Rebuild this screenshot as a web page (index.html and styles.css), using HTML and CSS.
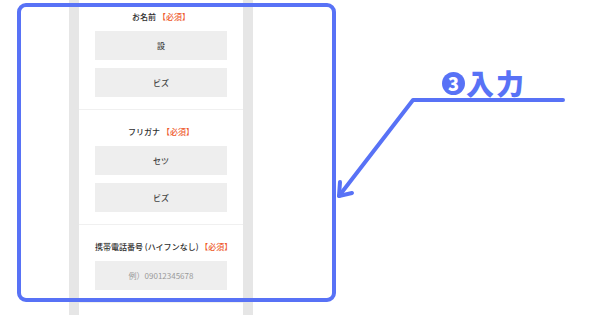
FILE: index.html
```html
<!DOCTYPE html>
<html lang="ja">
<head>
    <meta charset="UTF-8">
    <meta name="viewport" content="width=device-width, initial-scale=1.0">
    <title>入力フォーム</title>
    <link rel="stylesheet" href="styles.css">
</head>
<body>
    <div class="page">
        <div class="phone">
            <div class="form">
                <section class="field">
                    <p class="label">お名前 <span class="req">【必須】</span></p>
                    <div class="input">設</div>
                    <div class="input">ビズ</div>
                </section>
                <section class="field">
                    <p class="label">フリガナ <span class="req">【必須】</span></p>
                    <div class="input">セツ</div>
                    <div class="input">ビズ</div>
                </section>
                <section class="field">
                    <p class="label">携帯電話番号 (ハイフンなし) <span class="req">【必須】</span></p>
                    <div class="input placeholder">例）09012345678</div>
                </section>
                <section class="field">
                    <p class="label">&nbsp;</p>
                </section>
            </div>
        </div>

        <!-- annotation layer -->
        <div class="frame"></div>
        <svg class="arrow" width="600" height="315" viewBox="0 0 600 315">
            <polyline points="563,100 413,100 339,196" />
            <polyline points="340,182 339,196 352,193" />
        </svg>
        <div class="callout"><span class="num">3</span>入力</div>
    </div>
</body>
</html>
```

FILE: styles.css
```css
body {
    margin: 0;
    padding: 0;
    background-color: white;
    font-family: "Noto Sans CJK JP", "Noto Sans", sans-serif;
}
.page {
    position: relative;
    width: 600px;
    height: 315px;
    overflow: hidden;
    display: flex;
}
.phone {
    margin-left: 69px;
    width: 164px;
    height: 315px;
    border-left: 10px solid #e6e6e6;
    border-right: 10px solid #e6e6e6;
    background-color: white;
}
.form {
    margin-top: -5px;
}
.field {
    padding: 15px 16px 12px;
    border-bottom: 1px solid #f0f0f0;
}
.label {
    margin: 0 0 1px;
    height: 14px;
    font-size: 8px;
    line-height: 14px;
    font-weight: 500;
    color: #2e2e2e;
    text-align: center;
    white-space: nowrap;
}
.req {
    color: #ee5a2c;
}
.input {
    margin-top: 7px;
    height: 29px;
    line-height: 29px;
    background-color: #eeeeee;
    font-size: 8px;
    font-weight: 500;
    color: #444;
    text-align: center;
}
.input + .input {
    margin-top: 8px;
}
.input.placeholder {
    color: #9a9a9a;
    font-weight: 400;
}
.frame {
    position: absolute;
    left: 17px;
    top: 3px;
    width: 311px;
    height: 291px;
    border: 4px solid #5872f6;
    border-radius: 9px;
}
.arrow {
    position: absolute;
    left: 0;
    top: 0;
}
.arrow polyline {
    fill: none;
    stroke: #5872f6;
    stroke-width: 4;
    stroke-linecap: round;
    stroke-linejoin: round;
}
.callout {
    position: absolute;
    left: 442px;
    top: 64px;
    display: flex;
    align-items: center;
    font-size: 28px;
    line-height: 38px;
    font-weight: 900;
    letter-spacing: 2px;
    color: #5872f6;
}
.num {
    display: inline-flex;
    align-items: center;
    justify-content: center;
    width: 23px;
    height: 23px;
    margin-right: 1px;
    border-radius: 50%;
    background-color: #5872f6;
    color: white;
    font-size: 18px;
    line-height: 1;
    font-weight: 900;
    letter-spacing: 0;
}
```
